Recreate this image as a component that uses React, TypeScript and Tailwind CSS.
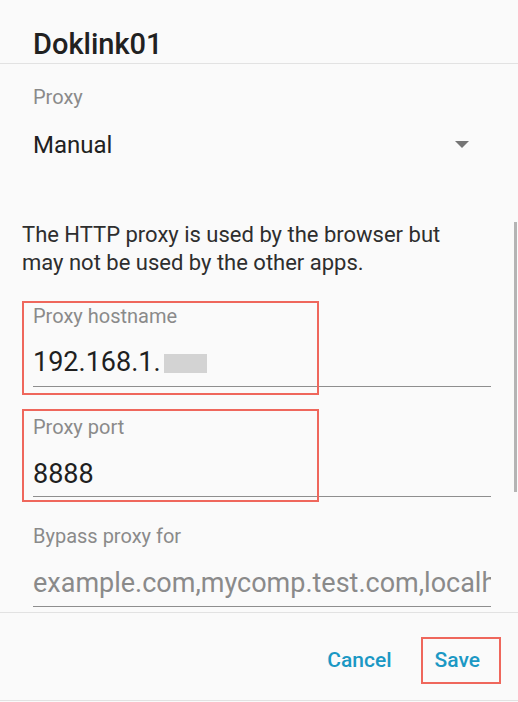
import React from "react";

export default function App() {
  return (
    <div className="w-[518px] h-[702px] bg-[#fafafa] flex flex-col font-[Roboto,sans-serif] relative overflow-hidden">
      {/* header */}
      <div className="h-[64px] border-b border-[#e2e2e2] pl-[33px] pt-[27px] shrink-0">
        <h1 className="text-[29px] leading-[34px] font-medium text-[#212121]">Doklink01</h1>
      </div>

      {/* body */}
      <div className="h-[549px] border-b border-[#e2e2e2] relative shrink-0">
        <div className="pt-[21px] pl-[33px] text-[20px] leading-[24px] text-[#8a8a8a]">Proxy</div>
        <div className="mt-[22px] flex items-center justify-between pl-[33px] pr-[49px] h-[28px]">
          <span className="text-[24px] leading-[28px] text-[#212121]">Manual</span>
          <svg width="14" height="7" viewBox="0 0 14 7" className="-mt-[2px]">
            <path d="M0 0 L14 0 L7 7 Z" fill="#757575" />
          </svg>
        </div>

        <p className="mt-[62px] pl-[22px] pr-[44px] text-[22px] leading-[28px] text-[#2e2e2e]">
          The HTTP proxy is used by the browser but may not be used by the other apps.
        </p>

        {/* hostname */}
        <div className="relative ml-[33px] mr-[27px] mt-[27px]">
          <div className="text-[20px] leading-[24px] text-[#8a8a8a]">Proxy hostname</div>
          <div className="mt-[18px] text-[27px] leading-[32px] text-[#1f1f1f] whitespace-nowrap flex items-center">
            192.168.1.
            <span className="inline-block ml-[3px] w-[43px] h-[19px] mt-[2px] bg-[#d3d3d3] blur-[0.5px]" />
          </div>
          <div className="mt-[8px] h-[1px] bg-[#8e8e8e]" />
          <div className="absolute left-[-11px] top-[-3px] w-[297px] h-[94px] border-2 border-[#ef675c]" />
        </div>

        {/* port */}
        <div className="relative ml-[33px] mr-[27px] mt-[28px]">
          <div className="text-[20px] leading-[24px] text-[#8a8a8a]">Proxy port</div>
          <div className="mt-[19px] text-[27px] leading-[32px] text-[#1f1f1f]">8888</div>
          <div className="mt-[6px] h-[1px] bg-[#8e8e8e]" />
          <div className="absolute left-[-11px] top-[-6px] w-[297px] h-[93px] border-2 border-[#ef675c]" />
        </div>

        {/* bypass */}
        <div className="relative ml-[33px] mr-[27px] mt-[27px]">
          <div className="text-[20px] leading-[24px] text-[#8a8a8a]">Bypass proxy for</div>
          <div className="mt-[19px] text-[27px] leading-[32px] text-[#8a8a8a] whitespace-nowrap overflow-hidden">
            example.com,mycomp.test.com,localhost
          </div>
          <div className="mt-[7px] h-[1px] bg-[#8e8e8e]" />
        </div>

        {/* scrollbar */}
        <div className="absolute right-[1px] top-[158px] w-[3px] h-[270px] bg-[#b4b4b4]" />
      </div>

      {/* footer */}
      <div className="h-[88px] border-b border-[#e2e2e2] flex justify-end items-start pt-[33px] pr-[38px] gap-[43px] shrink-0">
        <button className="text-[21px] leading-[28px] font-medium text-[#1b98c4]">Cancel</button>
        <div className="relative">
          <button className="text-[21px] leading-[28px] font-medium text-[#1b98c4]">Save</button>
          <div className="absolute left-[-14px] top-[-9px] w-[80px] h-[47px] border-2 border-[#ef675c]" />
        </div>
      </div>
    </div>
  );
}
